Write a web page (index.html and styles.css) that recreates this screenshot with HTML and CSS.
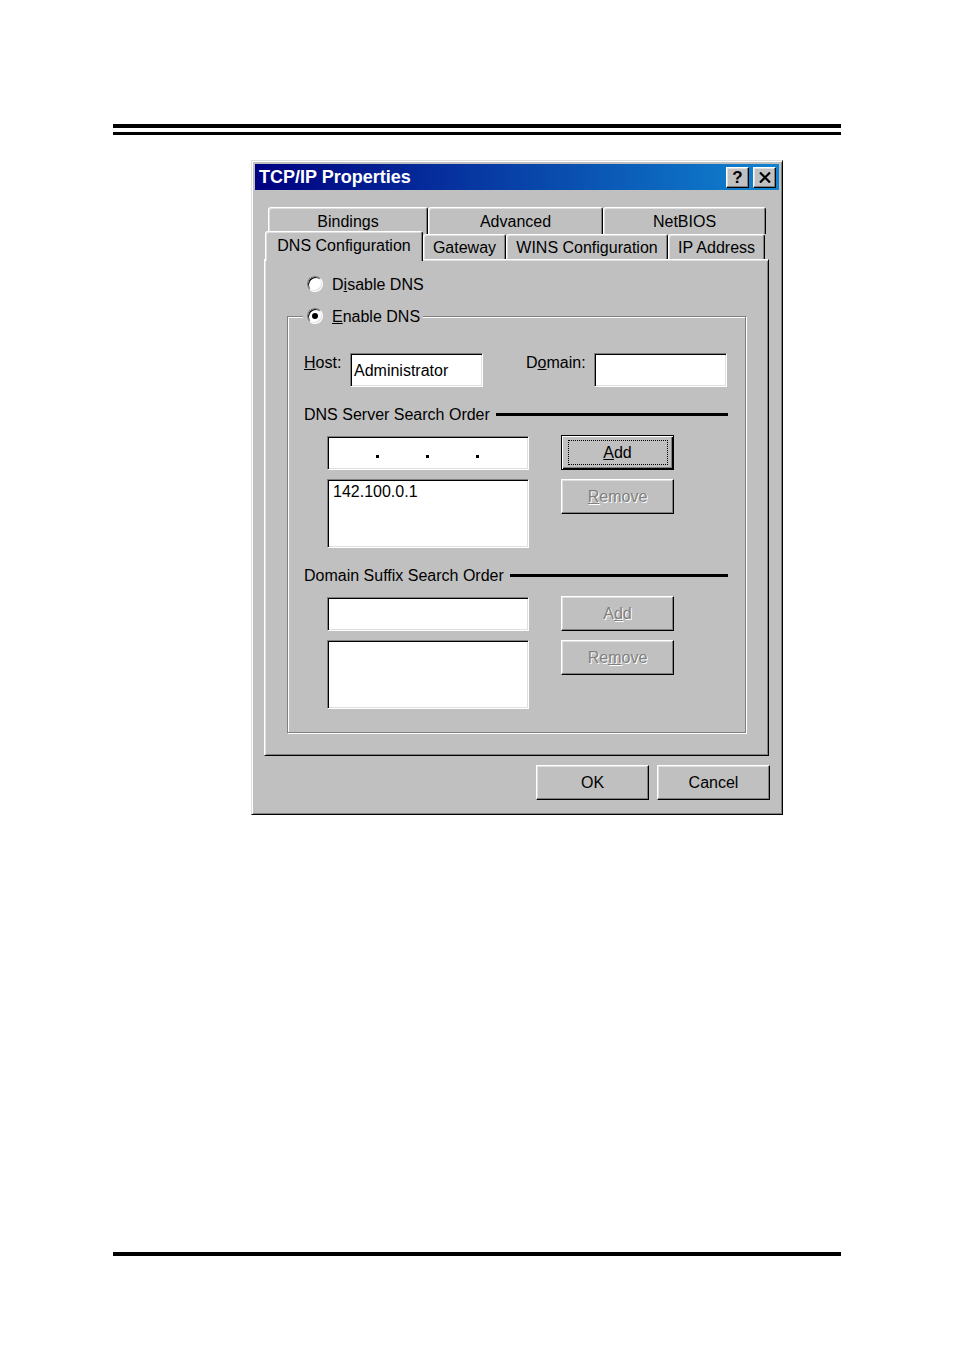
FILE: index.html
```html
<!DOCTYPE html>
<html>
<head>
<meta charset="utf-8">
<title>TCP/IP Properties</title>
<link rel="stylesheet" href="styles.css">
</head>
<body>
<div class="page">
  <div class="rule-double"></div>
  <div class="dialog">
    <div class="titlebar">
      <span class="title">TCP/IP Properties</span>
      <div class="title-btns">
        <span class="tbtn help">?</span>
        <span class="tbtn close"><svg width="12" height="11" viewBox="0 0 12 11"><path d="M1 0.5 L11 10.5 M11 0.5 L1 10.5" stroke="#000" stroke-width="2.2" fill="none"/></svg></span>
      </div>
    </div>
    <div class="tabs">
      <div class="tabrow back">
        <div class="tab w-bind">Bindings</div>
        <div class="tab w-adv">Advanced</div>
        <div class="tab w-net">NetBIOS</div>
      </div>
      <div class="tabrow front">
        <div class="tab selected w-dns">DNS Configuration</div>
        <div class="tab w-gw">Gateway</div>
        <div class="tab w-wins">WINS Configuration</div>
        <div class="tab w-ip">IP Address</div>
      </div>
    </div>
    <div class="panel">
      <div class="radio-row"><span class="radio"></span><span class="rtext">D<u>i</u>sable DNS</span></div>
      <div class="group">
        <div class="legend"><span class="radio checked"></span><span class="rtext"><u>E</u>nable DNS</span></div>
        <div class="host-row">
          <span class="lbl-host"><u>H</u>ost:</span>
          <div class="field">Administrator</div>
          <span class="lbl-domain">D<u>o</u>main:</span>
          <div class="field"></div>
        </div>
        <div class="section"><span>DNS Server Search Order</span><span class="line"></span></div>
        <div class="pair first">
          <div class="ipbox"><span class="dot"></span><span class="dot"></span><span class="dot"></span></div>
          <div class="btn default"><span class="focus"><u>A</u>dd</span></div>
        </div>
        <div class="pair">
          <div class="listbox">142.100.0.1</div>
          <div class="btn disabled"><u>R</u>emove</div>
        </div>
        <div class="section"><span>Domain Suffix Search Order</span><span class="line"></span></div>
        <div class="pair first">
          <div class="inbox"></div>
          <div class="btn disabled">A<u>d</u>d</div>
        </div>
        <div class="pair">
          <div class="listbox"></div>
          <div class="btn disabled">Re<u>m</u>ove</div>
        </div>
      </div>
    </div>
    <div class="dlg-btns">
      <div class="btn">OK</div>
      <div class="btn">Cancel</div>
    </div>
  </div>
  <div class="rule-single"></div>
</div>
</body>
</html>
```
FILE: styles.css
```css
body {
  margin: 0;
  background: #fff;
  font-family: "Liberation Sans", Arial, sans-serif;
  font-size: 16px;
  color: #000;
}
.page {
  padding-top: 124px;
}
.rule-double {
  margin-left: 113px;
  width: 728px;
  height: 4px;
  border-top: 4px solid #000;
  border-bottom: 3px solid #000;
}
.rule-single {
  margin: 437px 0 0 113px;
  width: 728px;
  height: 4px;
  background: #000;
}
.dialog {
  box-sizing: border-box;
  width: 532px;
  height: 655px;
  margin: 25px 0 0 251px;
  background: #c0c0c0;
  border: 1px solid;
  border-color: #dfdfdf #000 #000 #dfdfdf;
  box-shadow: inset 1px 1px #fff, inset -1px -1px #808080;
  padding: 3px;
  display: flex;
  flex-direction: column;
}
.titlebar {
  height: 26px;
  flex: none;
  background: linear-gradient(to right, #000080, #1084d0);
  display: flex;
  align-items: center;
  justify-content: space-between;
  padding: 0 3px 0 4px;
}
.title {
  color: #fff;
  font-weight: bold;
  font-size: 18px;
}
.title-btns {
  display: flex;
  gap: 4px;
}
.tbtn {
  box-sizing: border-box;
  width: 23px;
  height: 21px;
  background: #c0c0c0;
  border: 1px solid;
  border-color: #fff #000 #000 #fff;
  box-shadow: inset -1px -1px #808080, inset 1px 1px #dfdfdf;
  display: flex;
  align-items: center;
  justify-content: center;
  font-weight: bold;
  font-size: 17px;
  line-height: 1;
}
.tabs {
  margin: 17px 0 0 9px;
  width: 505px;
  flex: none;
}
.tabrow {
  display: flex;
}
.tabrow.back {
  height: 27px;
  padding-left: 4px;
}
.tabrow.front {
  height: 25px;
  padding-left: 1px;
  align-items: flex-end;
}
.tab {
  box-sizing: border-box;
  border: 1px solid;
  border-bottom: 0;
  border-color: #fff #000 #000 #fff;
  border-radius: 3px 3px 0 0;
  box-shadow: inset 1px 1px #dfdfdf, inset -1px 0 #808080;
  display: flex;
  align-items: center;
  justify-content: center;
  background: #c0c0c0;
  white-space: nowrap;
}
.back .tab {
  height: 27px;
  padding-top: 1px;
}
.front .tab {
  height: 25px;
  padding-top: 2px;
}
.front .tab.selected {
  height: 30px;
  margin-bottom: -2px;
  padding-top: 0;
  padding-bottom: 2px;
  position: relative;
  z-index: 2;
}
.w-bind { width: 160px; }
.w-adv { width: 175px; }
.w-net { width: 163px; }
.w-dns { width: 158px; }
.w-gw { width: 83px; }
.w-wins { width: 162px; }
.w-ip { width: 97px; }
.panel {
  box-sizing: border-box;
  flex: none;
  width: 505px;
  height: 497px;
  margin-left: 9px;
  border: 1px solid;
  border-color: #fff #000 #000 #fff;
  box-shadow: inset 1px 1px #dfdfdf, inset -1px -1px #808080;
  padding-top: 14px;
}
.radio-row {
  display: flex;
  align-items: center;
  height: 20px;
  padding-left: 42px;
  gap: 9px;
}
.rtext {
  padding-top: 2px;
}
.radio {
  box-sizing: border-box;
  width: 16px;
  height: 16px;
  border-radius: 50%;
  background: #fff;
  border: 1px solid;
  border-color: #808080 #fff #fff #808080;
  box-shadow: inset 1px 1px #000, inset -1px -1px #dfdfdf;
  position: relative;
  flex: none;
}
.radio.checked::after {
  content: "";
  position: absolute;
  left: 4px;
  top: 4px;
  width: 6px;
  height: 6px;
  border-radius: 50%;
  background: #000;
}
.group {
  box-sizing: border-box;
  position: relative;
  width: 459px;
  height: 417px;
  margin: 22px 0 0 22px;
  border: 1px solid #808080;
  box-shadow: inset 1px 1px #fff, 1px 1px #fff;
  padding: 36px 17px 0 16px;
}
.legend {
  position: absolute;
  top: -11px;
  left: 15px;
  height: 20px;
  display: flex;
  align-items: center;
  gap: 9px;
  padding: 0 3px 0 4px;
  background: #c0c0c0;
}
.host-row {
  display: flex;
  align-items: flex-start;
  height: 34px;
}
.lbl-host, .lbl-domain {
  padding-top: 1px;
}
.lbl-host { width: 46px; }
.lbl-domain { width: 68px; margin-left: 43px; }
.field, .ipbox, .inbox, .listbox {
  box-sizing: border-box;
  background: #fff;
  border: 1px solid;
  border-color: #808080 #fff #fff #808080;
  box-shadow: inset 1px 1px #000, inset -1px -1px #dfdfdf;
}
.field {
  width: 133px;
  height: 34px;
  padding: 1px 3px 0;
  display: flex;
  align-items: center;
}
.section {
  box-sizing: border-box;
  display: flex;
  align-items: center;
  height: 20px;
  margin-top: 17px;
  padding-top: 1px;
}
.section .line {
  flex: 1;
  height: 3px;
  background: #000;
  margin-left: 6px;
}
.pair {
  display: flex;
  align-items: flex-start;
  padding-left: 23px;
  gap: 32px;
  margin-top: 9px;
}
.pair.first {
  margin-top: 11px;
}
.ipbox, .inbox {
  width: 202px;
  height: 34px;
  margin-top: 1px;
}
.ipbox {
  display: flex;
  align-items: flex-end;
  padding: 0 0 11px 48px;
  gap: 47px;
}
.dot {
  width: 3px;
  height: 3px;
  background: #000;
}
.listbox {
  width: 202px;
  height: 69px;
  padding: 3px 5px;
}
.btn {
  box-sizing: border-box;
  width: 113px;
  height: 35px;
  background: #c0c0c0;
  border: 1px solid;
  border-color: #fff #000 #000 #fff;
  box-shadow: inset -1px -1px #808080, inset 1px 1px #dfdfdf;
  display: flex;
  align-items: center;
  justify-content: center;
}
.btn.default {
  border: 1px solid #000;
  box-shadow: inset 1px 1px #fff, inset -1px -1px #000, inset -2px -2px #808080;
}
.focus {
  box-sizing: border-box;
  width: 100px;
  height: 25px;
  border: 1px dotted #000;
  display: flex;
  align-items: center;
  justify-content: center;
}
.btn.disabled {
  color: #808080;
  text-shadow: 1px 1px #fff;
}
.dlg-btns {
  display: flex;
  justify-content: flex-end;
  gap: 8px;
  padding-right: 9px;
  margin-top: 9px;
}
```
